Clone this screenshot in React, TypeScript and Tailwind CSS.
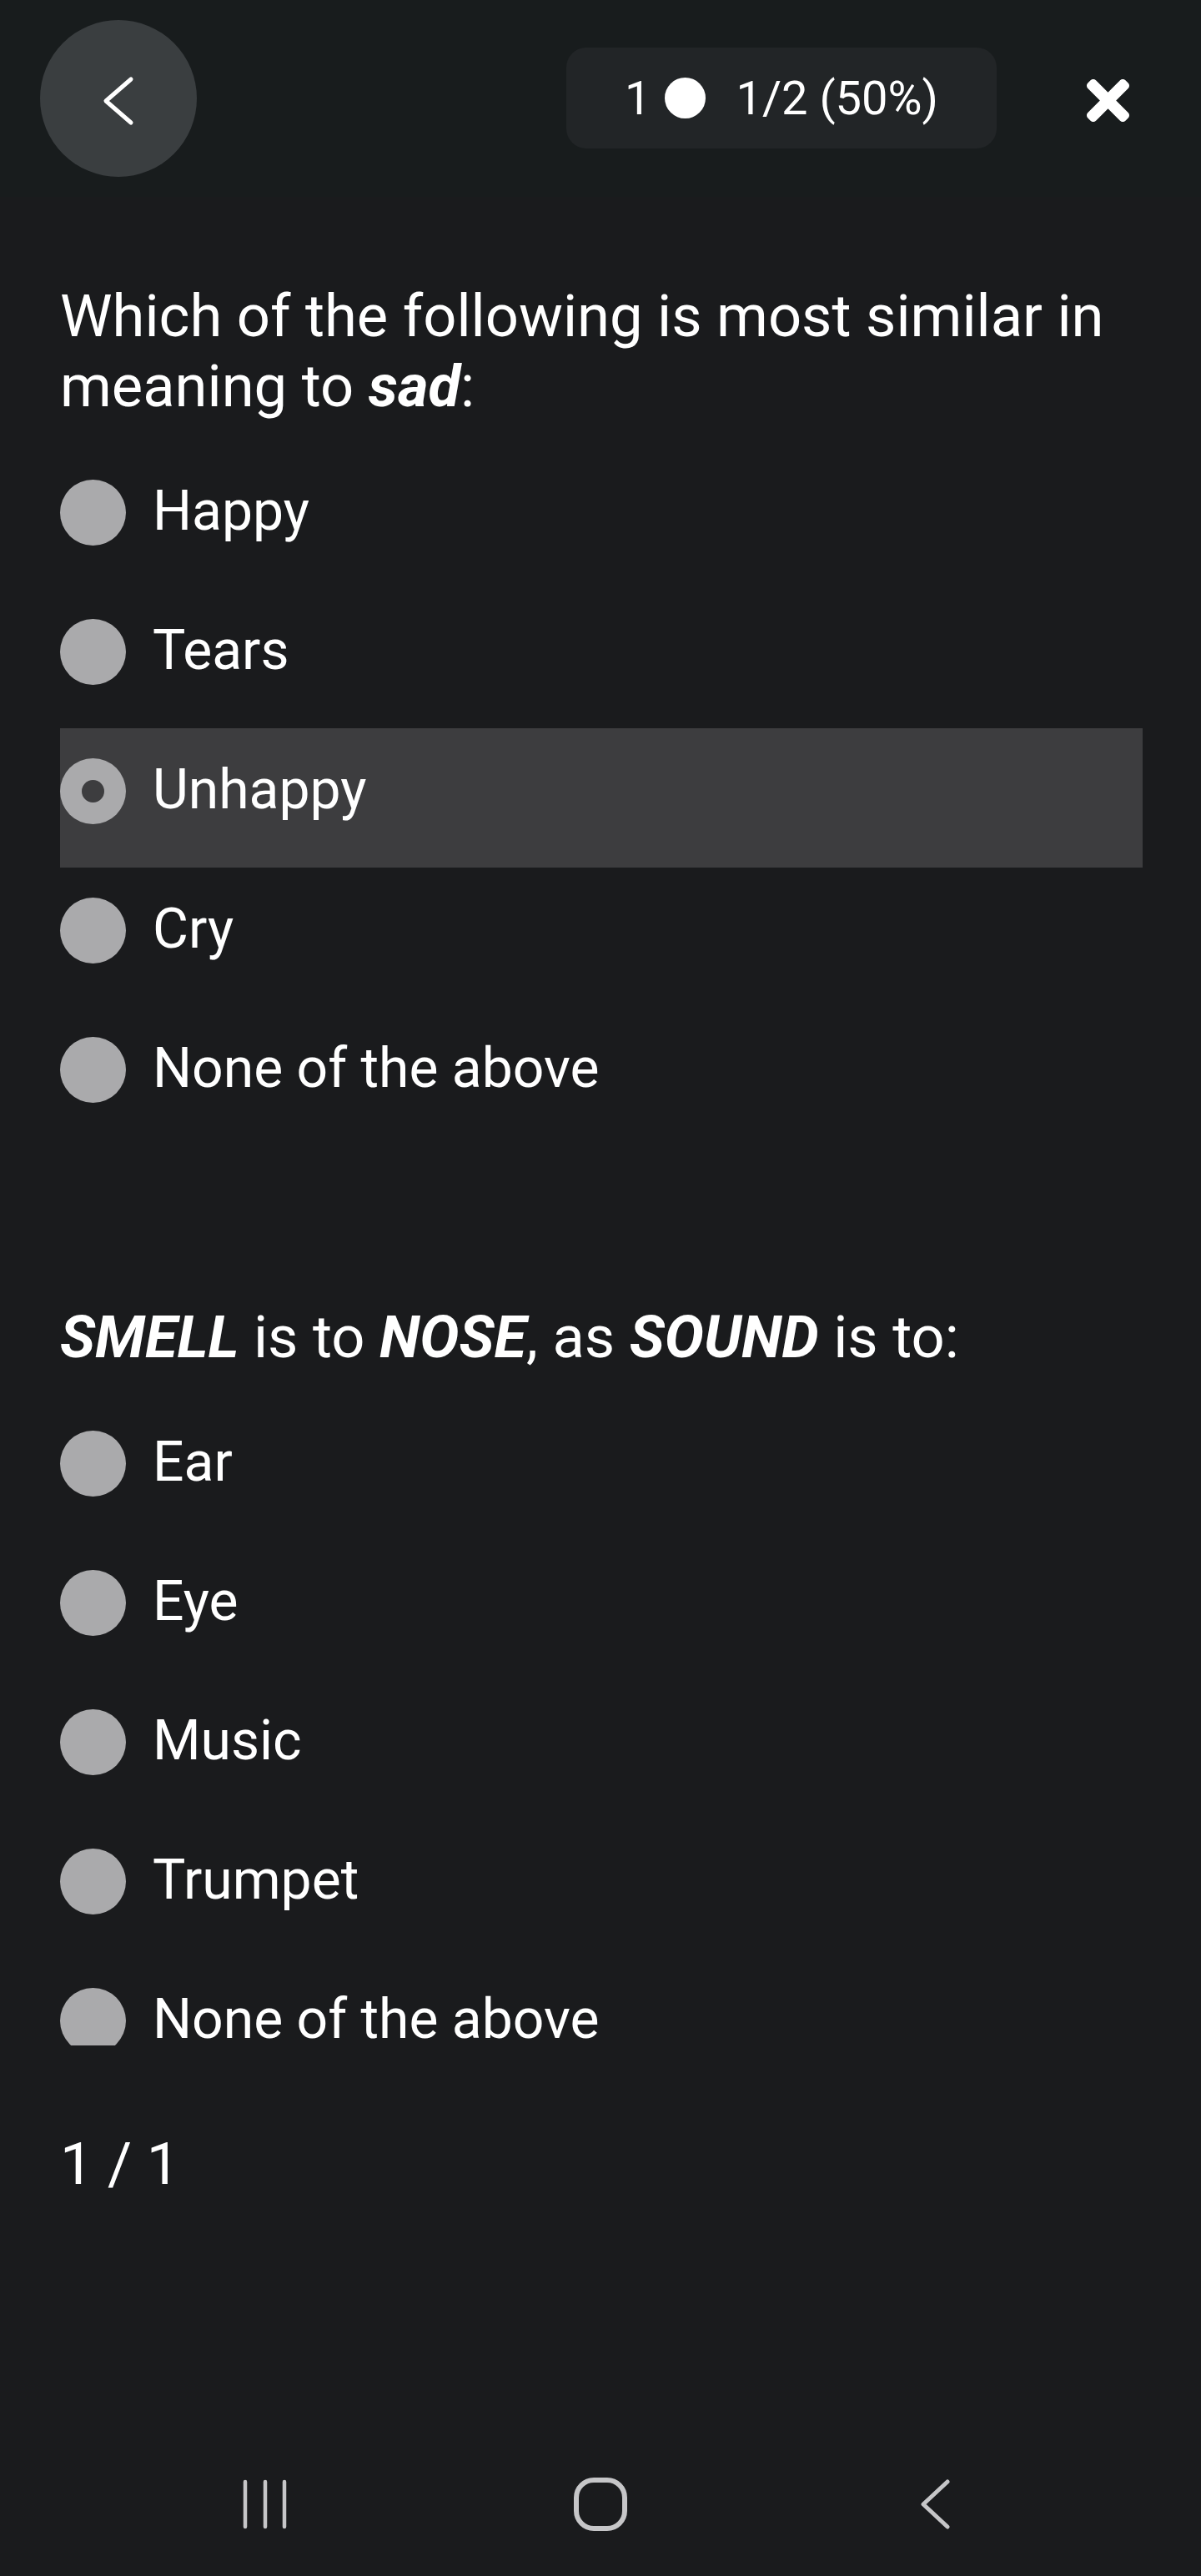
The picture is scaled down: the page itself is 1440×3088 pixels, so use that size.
import React from "react";

type Option = { label: string; selected?: boolean };

const q1Options: Option[] = [
    { label: "Happy" },
    { label: "Tears" },
    { label: "Unhappy", selected: true },
    { label: "Cry" },
    { label: "None of the above" },
];

const q2Options: Option[] = [
    { label: "Ear" },
    { label: "Eye" },
    { label: "Music" },
    { label: "Trumpet" },
    { label: "None of the above" },
];

function OptionRow({ label, selected }: Option) {
    return (
        <div
            className={`flex h-[167px] items-center pb-[16px] ${selected ? "bg-[#3d3d3f]" : ""}`}
        >
            <div className="flex h-[79px] w-[79px] shrink-0 items-center justify-center rounded-full bg-[#aaaaac]">
                {selected && <div className="h-[27px] w-[27px] rounded-full bg-[#3d3d3f]" />}
            </div>
            <span className="mb-[4px] ml-[32px] text-[66px] leading-[80px]">{label}</span>
        </div>
    );
}

function Question({ children, options }: { children: React.ReactNode; options: Option[] }) {
    return (
        <div>
            <p className="text-[70.5px] leading-[84px]">{children}</p>
            <div className="mt-[34px]">
                {options.map((o, i) => (
                    <OptionRow key={i} {...o} />
                ))}
            </div>
        </div>
    );
}

export default function App() {
    return (
        <div className="flex h-[3088px] w-[1440px] flex-col bg-[#1a1b1d] font-['Roboto','Liberation_Sans',sans-serif] text-white">
            {/* top bar */}
            <div className="flex h-[236px] shrink-0 items-start bg-[#181c1d] pl-[48px] pr-[86px] pt-[24px]">
                <button className="flex h-[188px] w-[188px] items-center justify-center rounded-full bg-[#3a3e40]">
                    <svg className="mt-[6px]" width="40" height="60" viewBox="0 0 40 60" fill="none">
                        <path
                            d="M35 4L5 30L35 56"
                            stroke="white"
                            strokeWidth={5}
                            strokeLinecap="round"
                            strokeLinejoin="round"
                        />
                    </svg>
                </button>

                <div className="ml-auto mt-[33px] flex h-[121px] w-[516px] items-center justify-center rounded-[24px] bg-[#222527] text-[56px] leading-none">
                    <span>1</span>
                    <span className="ml-[17px] mr-[36px] h-[49px] w-[49px] rounded-full bg-white" />
                    <span>1/2 (50%)</span>
                </div>

                <button className="ml-[108px] mt-[71px]">
                    <svg width="51" height="51" viewBox="0 80 352 352" fill="white">
                        <path d="M242.72 256l100.07-100.07c12.28-12.28 12.28-32.19 0-44.48l-22.24-22.24c-12.28-12.28-32.19-12.28-44.48 0L176 189.28 75.93 89.21c-12.28-12.28-32.19-12.28-44.48 0L9.21 111.45c-12.28 12.28-12.28 32.19 0 44.48L109.28 256 9.21 356.07c-12.28 12.28-12.28 32.19 0 44.48l22.24 22.24c12.28 12.28 32.2 12.28 44.48 0L176 322.72l100.07 100.07c12.28 12.28 32.2 12.28 44.48 0l22.24-22.24c12.28-12.28 12.28-32.19 0-44.48L242.72 256z" />
                    </svg>
                </button>
            </div>

            {/* questions */}
            <div className="h-[2216px] shrink-0 overflow-hidden pl-[72px] pr-[70px] pt-[101px]">
                <Question options={q1Options}>
                    Which of the following is most similar in meaning to{" "}
                    <b className="font-bold italic">sad</b>:
                </Question>
                <div className="h-[187px]" />
                <Question options={q2Options}>
                    <b className="font-bold italic">SMELL</b> is to{" "}
                    <b className="font-bold italic">NOSE</b>, as{" "}
                    <b className="font-bold italic">SOUND</b> is to:
                </Question>
            </div>

            <p className="mt-[100px] pl-[72px] text-[70.5px] leading-[84px]">1 / 1</p>

            <div className="flex-1" />

            {/* system nav bar */}
            <div className="flex h-[172px] shrink-0 items-center justify-center text-[#c6c6c8]">
                <div className="flex w-[402px] justify-center">
                    <svg width="60" height="60" viewBox="0 0 60 60" fill="none" stroke="currentColor" strokeWidth={4.5} strokeLinecap="round">
                        <path d="M6 3V57M30 3V57M53 3V57" />
                    </svg>
                </div>
                <div className="flex w-[402px] justify-center">
                    <svg width="64" height="64" viewBox="0 0 64 64" fill="none" stroke="currentColor" strokeWidth={6}>
                        <rect x="3" y="3" width="58" height="58" rx="21" />
                    </svg>
                </div>
                <div className="flex w-[402px] justify-center">
                    <svg width="40" height="60" viewBox="0 0 40 60" fill="none" stroke="currentColor" strokeWidth={5} strokeLinecap="round" strokeLinejoin="round">
                        <path d="M34 3L5 30L34 57" />
                    </svg>
                </div>
            </div>
        </div>
    );
}
